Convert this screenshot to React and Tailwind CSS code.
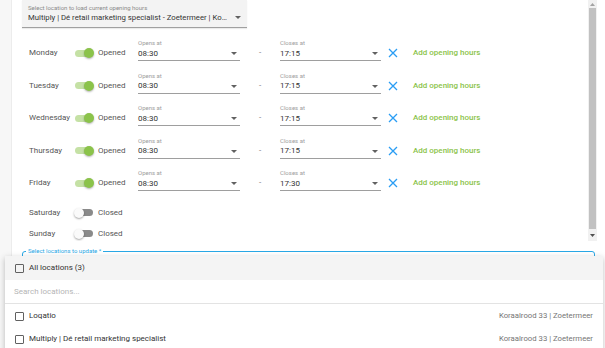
import React from "react";

const days = [
  { name: "Monday", open: "08:30", close: "17:15" },
  { name: "Tuesday", open: "08:30", close: "17:15" },
  { name: "Wednesday", open: "08:30", close: "17:15" },
  { name: "Thursday", open: "08:30", close: "17:15" },
  { name: "Friday", open: "08:30", close: "17:30" },
];

const Caret = () => (
  <svg width="6" height="3" viewBox="0 0 6 3" className="shrink-0">
    <path d="M0 0h6L3 3z" fill="#616161" />
  </svg>
);

const Toggle = ({ on }) => (
  <div className="relative w-[20px] h-[10px] shrink-0">
    <div
      className={
        on
          ? "absolute left-[1px] top-[1.5px] w-[18px] h-[7px] rounded-full bg-[#c5e1a5]"
          : "absolute left-[1px] top-[1.5px] w-[18px] h-[7px] rounded-full bg-[#8a8a8a]"
      }
    />
    <div
      className={
        on
          ? "absolute right-0 top-0 w-[10px] h-[10px] rounded-full bg-[#8bc34a] shadow-[0_1px_2px_rgba(0,0,0,0.3)]"
          : "absolute left-0 top-0 w-[10px] h-[10px] rounded-full bg-[#fafafa] shadow-[0_1px_2px_rgba(0,0,0,0.35)]"
      }
    />
  </div>
);

const TimeField = ({ label, value, width }) => (
  <div className={`${width} flex flex-col shrink-0`}>
    <div className="h-[8px] text-[6px] leading-[8px] text-[#9e9e9e]">{label}</div>
    <div className="h-[14px] flex items-center justify-between pr-[3px] border-b border-[#9e9e9e]">
      <span className="text-[8px] text-[#333]">{value}</span>
      <Caret />
    </div>
  </div>
);

const Cell = ({ className = "", children }) => (
  <div className={`h-[14px] flex items-center shrink-0 ${className}`}>{children}</div>
);

const Checkbox = () => (
  <div className="w-[9px] h-[9px] border-[1.5px] border-[#616161] rounded-[1px] shrink-0" />
);

export default function App() {
  return (
    <div className="relative w-[605px] h-[348px] overflow-hidden bg-white font-['Roboto',sans-serif]">
      <div className="flex h-full">
        <div className="w-[12px] bg-[#f7f7f7] border-r border-[#ececec] shrink-0" />
        <div className="flex-1 flex flex-col">
          <div className="flex h-[241px]">
            <div className="flex-1 overflow-hidden pl-[10px]">
              <div className="w-[225px] h-[28px] bg-[#f3f3f3] border-b border-[#a0a0a0] shadow-[0_1px_1px_rgba(0,0,0,0.08)] px-[6px] flex flex-col">
                <div className="pt-[4px] text-[6px] leading-[7px] text-[#8a8a8a]">
                  Select location to load current opening hours
                </div>
                <div className="flex items-center gap-[6px] h-[13px]">
                  <span className="flex-1 truncate text-[7.75px] text-[#333]">
                    Multiply | Dé retail marketing specialist - Zoetermeer | Koraalrood 33
                  </span>
                  <Caret />
                </div>
              </div>

              <div className="mt-[0.5px]">
                {days.map((d) => (
                  <div key={d.name} className="h-[32.5px] flex items-end pl-[7px]">
                    <Cell className="w-[45px] mb-[1px] text-[8px] text-[#555]">{d.name}</Cell>
                    <Cell className="mb-[1px]">
                      <Toggle on />
                    </Cell>
                    <Cell className="w-[44px] pl-[4px] mb-[1px] text-[8px] text-[#555]">Opened</Cell>
                    <TimeField label="Opens at" value={d.open} width="w-[102px]" />
                    <Cell className="w-[40px] justify-center mb-[1px] text-[8px] text-[#777]">-</Cell>
                    <TimeField label="Closes at" value={d.close} width="w-[101px]" />
                    <Cell className="ml-[7px] mb-[1px]">
                      <svg width="10" height="10" viewBox="0 0 10 10">
                        <path d="M1 1l8 8M9 1l-8 8" stroke="#2a9df4" strokeWidth="1.3" />
                      </svg>
                    </Cell>
                    <Cell className="ml-[15px] mb-[1px] text-[8px] font-medium text-[#8bc34a]">
                      Add opening hours
                    </Cell>
                  </div>
                ))}
                <div className="mt-[11px]">
                  {["Saturday", "Sunday"].map((n) => (
                    <div key={n} className="h-[21px] flex items-center pl-[7px]">
                      <div className="w-[45px] text-[8px] text-[#555]">{n}</div>
                      <Toggle on={false} />
                      <div className="pl-[4px] text-[8px] text-[#555]">Closed</div>
                    </div>
                  ))}
                </div>
              </div>
            </div>

            <div className="w-[9px] bg-[#f1f1f1] flex flex-col shrink-0">
              <div className="h-[8px] flex items-center justify-center">
                <svg width="5" height="3" viewBox="0 0 5 3">
                  <path d="M0 3h5L2.5 0z" fill="#a3a3a3" />
                </svg>
              </div>
              <div className="flex-1 mx-[1px] bg-[#c1c1c1]" />
              <div className="h-[12px] flex items-center justify-center">
                <svg width="5" height="3" viewBox="0 0 5 3">
                  <path d="M0 0h5L2.5 3z" fill="#505050" />
                </svg>
              </div>
            </div>
            <div className="w-[8px] shrink-0" />
          </div>

          <div className="mt-[10px] mx-[10px] relative h-[40px] border border-[#29a8e6] rounded-[3px]">
            <div className="absolute left-[3px] top-[-5px] bg-white px-[2px] text-[6px] leading-[8px] text-[#29a8e6]">
              Select locations to update *
            </div>
          </div>
        </div>
      </div>

      <div className="absolute left-[5px] top-[256px] w-[598px] h-[100px] bg-white shadow-[0_2px_6px_rgba(0,0,0,0.25)]">
        <div className="h-[24px] bg-[#f4f4f4] flex items-center gap-[5px] pl-[10px]">
          <Checkbox />
          <span className="text-[8px] text-[#333]">All locations (3)</span>
        </div>
        <div className="h-[24px] flex items-center pl-[9px] border-b border-[#e3e3e3]">
          <span className="text-[8px] text-[#b5b5b5]">Search locations...</span>
        </div>
        {["Loqatio", "Multiply | Dé retail marketing specialist"].map((n) => (
          <div key={n} className="h-[23px] flex items-center gap-[5px] pl-[10px] pr-[10px] pt-[1px]">
            <Checkbox />
            <span className="flex-1 text-[8px] text-[#333]">{n}</span>
            <span className="text-[7.75px] text-[#757575]">Koraalrood 33 | Zoetermeer</span>
          </div>
        ))}
      </div>
    </div>
  );
}
